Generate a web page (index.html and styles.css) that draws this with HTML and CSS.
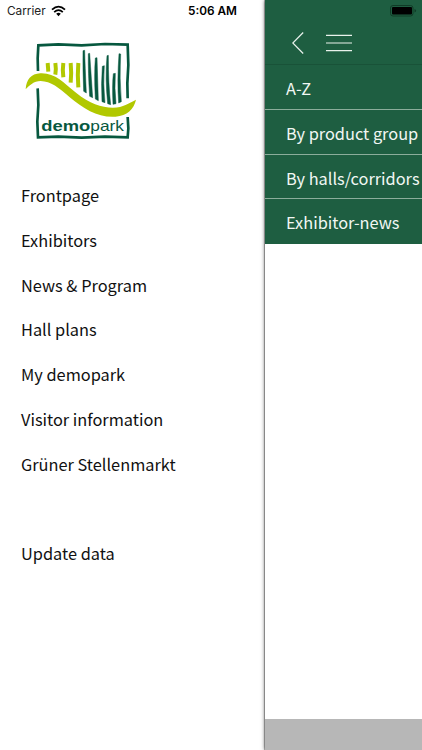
FILE: index.html
```html
<!DOCTYPE html>
<html lang="en">
<head>
    <meta charset="UTF-8">
    <meta name="viewport" content="width=device-width, initial-scale=1.0">
    <title>demopark</title>
    <link rel="stylesheet" href="styles.css">
</head>
<body>

<div class="app">
    <aside class="drawer">
        <div class="status-bar">
            <span class="carrier">Carrier</span>
            <svg class="wifi" width="15" height="12" viewBox="0 0 15 12" fill="none" stroke="#000" stroke-width="1.8">
                <path d="M1 4.6Q7.5 -1.4 14 4.6"/>
                <path d="M3.2 7.1Q7.5 3.2 11.8 7.1"/>
                <path d="M5.2 8.8Q7.5 6.9 9.8 8.8L7.5 11.2Z" fill="#000" stroke="none"/>
            </svg>
            <span class="time">5:06 AM</span>
        </div>

        <svg class="logo" width="130" height="110" viewBox="0 0 390 330">
            <!-- Frame -->
            <g fill="none" stroke="#07583f" stroke-width="8">
                <path d="M69 108L68 70L70 31L130 28L200 31L270 27L338 29L340 90L337 145L338 190"/>
                <path d="M68 160L70 210L67 260L69 307L130 305L200 308L270 305L338 307L340 280L338 246" />
            </g>
            <!-- Light stripes -->
            <g fill="none" stroke="#b1c800" stroke-width="12">
                <path d="M98 84L100 110"/>
                <path d="M121 84Q124 102 121 119"/>
                <path d="M145 84Q142 104 145 127"/>
                <path d="M167 84Q170 112 167 143"/>
                <path d="M190 84Q187 120 190 157"/>
            </g>
            <!-- Dark blades -->
            <g fill="#07583f" stroke="#07583f" stroke-width="1.5">
                <path d="M204 47L209 46Q210 90 214 174L206 169Q203 100 204 47Z"/>
                <path d="M220 56L224 55L233 188L224 184Q219 110 220 56Z"/>
                <path d="M241 69L246 68L250 197L241 192Q237 120 241 69Z"/>
                <path d="M262 94L268 92Q264 145 270 203L261 200Q258 145 262 94Z"/>
                <path d="M276 62L280 61Q280 150 287 209L278 206Q270 130 276 62Z"/>
                <path d="M295 116L301 115Q298 160 303 206L294 208Q291 150 295 116Z"/>
                <path d="M312 56L317 57Q313 130 319 200L311 204Q306 140 312 56Z"/>
            </g>
            <path fill="#b1c800" d="M32 163C34 134 48 116 76 115C120 113 145 143 184 174C224 206 258 218 294 218C326 217 340 205 363 194C357 222 336 242 302 245C250 249 206 221 166 188C130 157 108 139 77 138C56 138 44 151 32 163Z"/>
            <text class="logo-text logo-bold" x="79" y="287" textLength="147" lengthAdjust="spacingAndGlyphs">demo</text>
            <text class="logo-text" x="226" y="287" textLength="101" lengthAdjust="spacingAndGlyphs">park</text>
        </svg>

        <nav class="main-menu">
            <a>Frontpage</a>
            <a>Exhibitors</a>
            <a>News &amp; Program</a>
            <a>Hall plans</a>
            <a>My demopark</a>
            <a>Visitor information</a>
            <a>Grüner Stellenmarkt</a>
            <a class="update">Update data</a>
        </nav>
    </aside>

    <main class="page">
        <header class="page-header">
            <svg class="battery" width="27" height="12" viewBox="0 0 27 12">
                <rect x="0.5" y="0.5" width="22.5" height="10.5" rx="2.5" fill="none" stroke="#103c27"/>
                <rect x="2" y="2" width="20" height="7.5" rx="1" fill="#000"/>
                <path d="M24.5 4v3.6q1.6-.5 1.6-1.8t-1.6-1.8z" fill="#103c27"/>
            </svg>
            <svg class="back" width="12" height="22" viewBox="0 0 12 22" fill="none" stroke="#e9f2ec" stroke-width="1.2">
                <path d="M11.2 0.5L0.8 11L11.2 21.5"/>
            </svg>
            <svg class="burger" width="26" height="18" viewBox="0 0 26 18" fill="none" stroke="#e9f2ec" stroke-width="1.2">
                <path d="M0 1.3H26M0 9H26M0 16.7H26"/>
            </svg>
        </header>
        <nav class="sub-menu">
            <a>A-Z</a>
            <a>By product group</a>
            <a>By halls/corridors</a>
            <a>Exhibitor-news</a>
        </nav>
        <footer class="page-footer"></footer>
    </main>
</div>

</body>
</html>
```

FILE: styles.css
```css
body {
    margin: 0;
    background-color: #fff;
    font-family: "Noto Sans CJK SC", "Noto Sans", sans-serif;
    font-size: 16.35px;
    color: #111;
}
.app {
    display: flex;
    height: 750px;
    overflow: hidden;
}
.drawer {
    width: 265px;
    flex-shrink: 0;
}
.status-bar {
    display: flex;
    align-items: center;
    height: 22px;
    padding-left: 7px;
    font-family: Inter, sans-serif;
    font-size: 11.8px;
    color: #000;
}
.carrier {
    width: 44px;
    color: #222;
}
.time {
    margin-left: 122px;
    font-weight: 600;
    white-space: nowrap;
}
.logo {
    display: block;
    margin: 13px 0 0 15px;
}
.logo-text {
    font-family: "Liberation Sans", Arial, sans-serif;
    font-size: 45px;
    fill: #07583f;
}
.logo-bold {
    font-weight: bold;
}
.main-menu {
    margin: 28px 0 0 21px;
}
.main-menu a {
    display: block;
    height: 44.8px;
    line-height: 44.8px;
}
.main-menu .update {
    margin-top: 44.8px;
}
.page {
    display: flex;
    flex-direction: column;
    flex: 1;
    min-width: 0;
    box-shadow: -1px 0 0 rgba(0, 0, 0, 0.25), 0 0 4px rgba(0, 0, 0, 0.7);
}
.page-header {
    position: relative;
    display: flex;
    align-items: center;
    gap: 22px;
    box-sizing: border-box;
    height: 65px;
    padding: 21px 0 0 27px;
    background-color: #1e5e41;
    border-bottom: 1px solid #195238;
}
.battery {
    position: absolute;
    top: 5px;
    right: 5px;
}
.sub-menu a {
    display: block;
    box-sizing: border-box;
    height: 44.8px;
    padding-left: 21px;
    line-height: 46px;
    white-space: nowrap;
    color: #f1f7f3;
    background-color: #1e5e41;
    border-bottom: 1px solid #8cad9b;
}
.sub-menu a:last-child {
    border-bottom: none;
}
.page-footer {
    height: 31px;
    margin-top: auto;
    background-color: #b7b7b7;
}
```
